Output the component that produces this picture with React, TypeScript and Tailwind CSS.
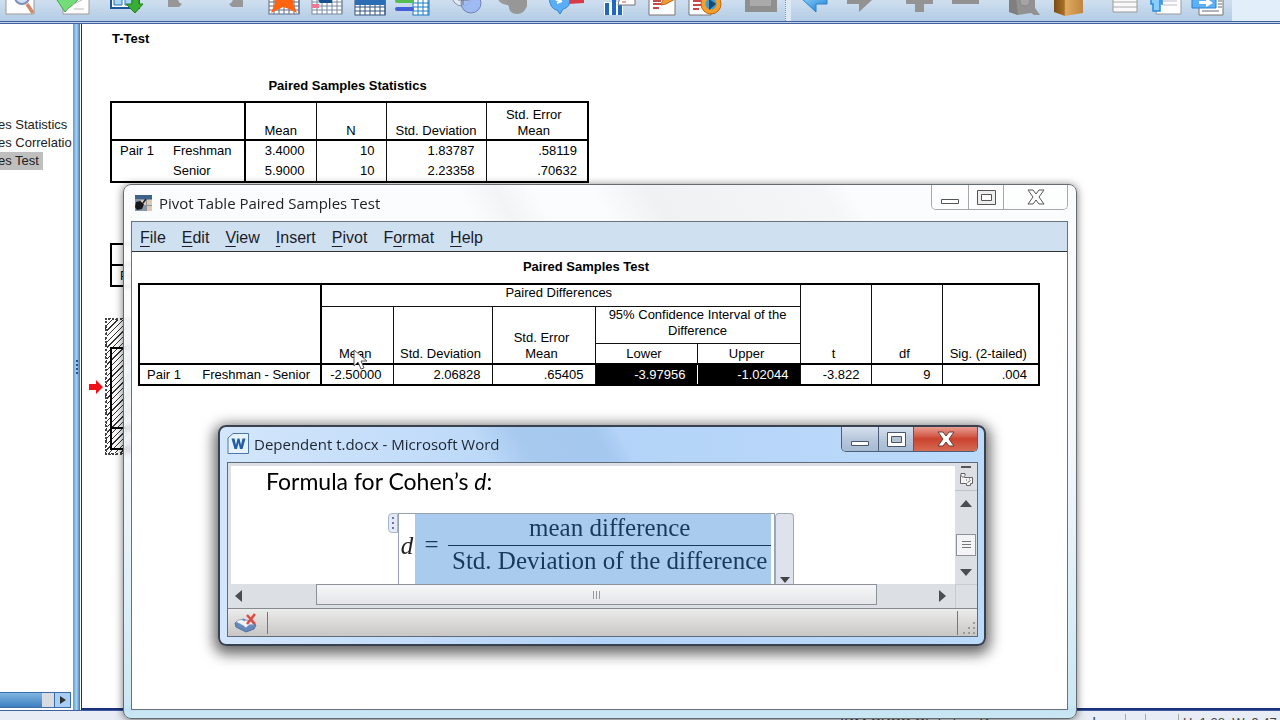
import type { ReactNode } from "react";

function ToolButton({ label, className, children }: { label: string; className: string; children: ReactNode }) {
  return (
    <button type="button" aria-label={label} className={"h-[21px] w-9 shrink-0 overflow-hidden " + className}>
      <svg viewBox="0 0 36 21" className="block h-[21px] w-9">
        {children}
      </svg>
    </button>
  );
}

function Grid({ x, y, w, h, color }: { x: number; y: number; w: number; h: number; color: string }) {
  const cols = Math.floor(w / 5);
  const rows = Math.floor(h / 4);
  return (
    <g stroke={color} strokeWidth="1">
      <rect x={x} y={y} width={w} height={h} fill="#fff" />
      {Array.from({ length: cols }, (_, i) => (
        <path key={"c" + i} d={`M${x + (i + 1) * 5} ${y}v${h}`} />
      ))}
      {Array.from({ length: rows }, (_, i) => (
        <path key={"r" + i} d={`M${x} ${y + h - (i + 1) * 4}h${w}`} />
      ))}
    </g>
  );
}

function Toolbar() {
  return (
    <header className="flex h-[21px] shrink-0 bg-[#e2eefa]">
      <div className="flex w-[1232px] shrink-0 bg-linear-to-b from-[#cfdff0] to-[#b3cce4]">
        <svg width="0" height="0" className="absolute">
          <defs>
            <linearGradient id="blue" x1="0" y1="0" x2="1" y2="1">
              <stop offset="0" stopColor="#8fd0ff" />
              <stop offset="1" stopColor="#1277cc" />
            </linearGradient>
            <linearGradient id="book" x1="0" y1="0" x2="1" y2="0">
              <stop offset="0" stopColor="#7a4c14" />
              <stop offset="0.35" stopColor="#a86e28" />
              <stop offset="0.4" stopColor="#e0aa60" />
              <stop offset="1" stopColor="#bf8540" />
            </linearGradient>
          </defs>
        </svg>
        <ToolButton label="Print preview" className="ml-0.5">
          <path d="M4-2h28v16H4z" fill="#fdfdfd" stroke="#a09a98" />
          <circle cx="20" cy="-3" r="7" fill="#cfe0fa" stroke="#7f8db5" strokeWidth="2" />
          <path d="M25 4l6 9" stroke="#d08866" strokeWidth="3.500" />
        </ToolButton>
        <ToolButton label="Export" className="ml-4">
          <path d="M9-2h26v16H9z" fill="#fdfdfd" stroke="#a09a98" />
          <path d="M1-3h24c-3 8-9 8-14 15L9 9z" fill="#74dd78" stroke="#3ca84a" />
          <path d="M18 5l10-5M20 9h10" stroke="#bbb" />
        </ToolButton>
        <ToolButton label="Recall dialog" className="ml-[18px]">
          <path d="M3-2h28v10H3z" fill="#fff" stroke="#1b5a9c" strokeWidth="2" />
          <path d="M6-2h8v7H6zM17-2h7v7h-7z" fill="#a7d7ff" stroke="#2473bd" />
          <path d="M24-2h7v6h4l-8 9-9-9h6z" fill="#39ad34" stroke="#20831c" />
        </ToolButton>
        <ToolButton label="Undo" className="ml-6">
          <path d="M0-2h10c0 3 1 5 4 6l-3 3H0z" fill="#979797" />
        </ToolButton>
        <ToolButton label="Redo" className="ml-1">
          <path d="M35-2H25c0 3-1 5-4 6l3 3h11z" fill="#979797" />
        </ToolButton>
        <ToolButton label="Go to data" className="ml-[21px]">
          <Grid x={4} y={-6} w={30} h={20} color="#5d6c88" />
          <path d="M9-3h19v6l4 10-8-4-6-2-6 3-6 3 4-10z" fill="#ff6510" />
        </ToolButton>
        <ToolButton label="Go to case" className="ml-2">
          <Grid x={3} y={-6} w={30} h={20} color="#7788a2" />
          <path d="M8-2h15v5H11z" fill="#16508f" />
          <path d="M3 4h7v4H3z" fill="#f07892" />
        </ToolButton>
        <ToolButton label="Go to variable" className="ml-[7px]">
          <Grid x={3} y={-5} w={30} h={20} color="#33557e" />
          <path d="M3-2h30v7H3z" fill="#2c6cb4" />
        </ToolButton>
        <ToolButton label="Variables" className="ml-[7px]">
          <Grid x={18} y={-6} w={16} h={21} color="#187bc6" />
          <path d="M2 1h15" stroke="#55bd52" strokeWidth="4" strokeLinecap="round" />
          <path d="M2 9h15" stroke="#4460d8" strokeWidth="4" strokeLinecap="round" />
        </ToolButton>
        <ToolButton label="Use variable sets" className="ml-[18px]">
          <circle cx="13" cy="-4" r="10" fill="#ecf0f8" fillOpacity="0.6" stroke="#8b92a0" />
          <circle cx="22" cy="3" r="10" fill="#98b5f3" fillOpacity="0.85" stroke="#7482b4" />
          <path d="M14-2v7M9 0h11" stroke="#777" />
        </ToolButton>
        <ToolButton label="Show all variables" className="ml-[9px]">
          <circle cx="13" cy="-5" r="10" fill="#9a9a9a" />
          <path d="M10-2h23v8c-2 5-5 8-10 8s-8-3-8-7z" fill="#979797" />
        </ToolButton>
        <ToolButton label="Spell check" className="ml-[18px]">
          <path d="M19-2h17v5l-16 1z" fill="#d83a47" />
          <path d="M1-2h20c2 6-1 10-6 11l-3 5-3-4C4 9 2 5 1-2z" fill="#59aef5" stroke="#3583cf" />
          <path d="M7-1l6 3M9 3l5-2" stroke="#fff" strokeWidth="2" />
        </ToolButton>
        <ToolButton label="Insert chart" className="ml-[17px]">
          <path d="M3 2h19v13H3z" fill="#fff" />
          <path d="M6 3v12M13 0v15M19 5v10" stroke="#2169bd" strokeWidth="4" />
          <path d="M19-3h15v8H17z" fill="#fff" stroke="#777" />
          <path d="M22-1h4M21 2h4M29-1h3" stroke="#d44" />
        </ToolButton>
        <ToolButton label="Edit script" className="ml-2">
          <path d="M4-2h26v17H4z" fill="#fff" stroke="#777" />
          <path d="M8 1h8M8 4h11M8 8h6" stroke="#c5484a" strokeWidth="2" />
          <path d="M16 5l2-5 9-4 3 3-9 5z" fill="#f09a32" stroke="#be6a14" />
        </ToolButton>
        <ToolButton label="Run script" className="ml-1.5">
          <path d="M2-2h22v17H2z" fill="#fff" stroke="#777" />
          <path d="M6 1h8M6 5h9M6 9h6" stroke="#c5484a" strokeWidth="2" />
          <circle cx="24" cy="4" r="10" fill="#f59e28" stroke="#bc6810" />
          <circle cx="24" cy="4" r="5.500" fill="#469bcc" />
          <path d="M22-1l7 5-7 6z" fill="#174973" />
        </ToolButton>
        <ToolButton label="Designate window" className="ml-5">
          <path d="M2-2h32v14H2z" fill="#8f8f8f" />
          <path d="M7-2h21v8H7z" fill="#aaa" />
        </ToolButton>
        <span className="ml-1.5 mr-1.5 h-[21px] w-1.5 shrink-0 border-l border-dotted border-l-[#7d91aa] bg-[#dce8f4]" />
        <ToolButton label="Back" className="">
          <path d="M4-2h26v6H19v8L4-2z" fill="url(#blue)" stroke="#2b82cc" />
        </ToolButton>
        <ToolButton label="Forward" className="ml-2">
          <path d="M31-2H6v6h12v8L31 0z" fill="#929292" />
        </ToolButton>
        <ToolButton label="Expand" className="ml-6">
          <path d="M14-4h9v4h9v4h-9v8h-9V4H5V0h9z" fill="#949494" />
        </ToolButton>
        <ToolButton label="Collapse" className="ml-2.5">
          <path d="M5-2h27v6H5z" fill="#929292" />
        </ToolButton>
        <ToolButton label="Show" className="ml-[23px]">
          <path d="M3-2h26v10l5 7h-6l-3-2-13 2-9-3z" fill="#929292" />
          <path d="M3-2h7l2 17-9-3z" fill="#7f7f7f" />
          <circle cx="19" cy="1" r="5" fill="#a5a5a5" stroke="#888" />
        </ToolButton>
        <ToolButton label="Hide" className="ml-2">
          <path d="M4-2h29v15l-18 3-11-4z" fill="url(#book)" />
        </ToolButton>
        <ToolButton label="Insert heading" className="ml-[21px]">
          <path d="M6-2h24v14H6z" fill="#fafafa" stroke="#999" />
          <path d="M6 2h24M6 7h24" stroke="#aaa" />
        </ToolButton>
        <ToolButton label="Insert title" className="ml-[5px]">
          <path d="M10-2h23v16H8z" fill="#fff" stroke="#999" />
          <path d="M15 1h14M15 5h14" stroke="#bbc" />
          <path d="M3-2h9v13H5V4H3zM9-2h5v7" fill="#8acdff" stroke="#268add" strokeWidth="1.500" />
        </ToolButton>
        <ToolButton label="Insert text" className="ml-1.5">
          <path d="M9-2h24v17H9z" fill="#fff" stroke="#777" />
          <path d="M12 11h17M28 1h4M28 4h4M28 7h4" stroke="#667" />
          <path d="M2-2h24v10H2z" fill="#5eb0f6" stroke="#2780cf" />
          <path d="M9 1h7v-3l7 5-7 4V4H9z" fill="#fff" />
        </ToolButton>
      </div>
    </header>
  );
}

function Outline() {
  return (
    <aside className="flex w-[73px] shrink-0 flex-col overflow-hidden bg-white font-['Liberation_Sans',sans-serif] text-[13px] leading-[18px] text-[#222]">
      <ul className="-ml-0.5 flex flex-1 flex-col items-start pt-[92px] whitespace-nowrap">
        <li>es Statistics</li>
        <li>es Correlatio</li>
        <li className="bg-[#bfbfbf] pr-1">es Test</li>
      </ul>
      <div className="mr-0.5 mb-0.5 flex h-4 border border-l-0 border-[#3c6da8]">
        <div className="flex-1 bg-linear-to-b from-[#7fb5e0] to-[#3d7fc0]" />
        <div className="w-3 bg-[#d8dbe0]" />
        <button type="button" aria-label="Scroll right" className="flex w-4 items-center justify-center border-l border-[#3c6da8] bg-[#a9cdf3]">
          <svg viewBox="0 0 6 8" className="h-2 w-1.5">
            <path d="M0 0l6 4-6 4z" fill="#333" />
          </svg>
        </button>
      </div>
    </aside>
  );
}

const thin = "border-[#111]";

function StatisticsTable() {
  const rows = [
    ["Pair 1", "Freshman", "3.4000", "10", "1.83787", ".58119"],
    ["", "Senior", "5.9000", "10", "2.23358", ".70632"],
  ];
  return (
    <table className="mt-[31px] ml-7 w-[477px] table-fixed border-collapse border-2 border-black text-[13px] leading-4">
      <caption className="pr-1 pb-[7px] font-bold">Paired Samples Statistics</caption>
      <colgroup>
        <col className="w-[54px]" />
        <col className="w-[80px]" />
        <col className="w-[71px]" />
        <col className="w-[70px]" />
        <col className="w-[100px]" />
        <col className="w-[102px]" />
      </colgroup>
      <thead>
        <tr className="h-[38px] border-b-2 border-black text-center align-bottom">
          <th colSpan={2} className="border-r-2 border-black" />
          <th className={"border-r font-normal " + thin}>Mean</th>
          <th className={"border-r font-normal " + thin}>N</th>
          <th className={"border-r font-normal " + thin}>Std. Deviation</th>
          <th className="pr-1.5 font-normal">
            Std. Error
            <br />
            Mean
          </th>
        </tr>
      </thead>
      <tbody>
        {rows.map((r) => (
          <tr key={r[1]} className="h-[21px] text-right">
            <th className="pl-2 text-left font-normal">{r[0]}</th>
            <th className="border-r-2 border-black pl-2 text-left font-normal">{r[1]}</th>
            <td className={"border-r pr-[11px] " + thin}>{r[2]}</td>
            <td className={"border-r pr-[11px] " + thin}>{r[3]}</td>
            <td className={"border-r pr-[11px] " + thin}>{r[4]}</td>
            <td className="pr-2.5">{r[5]}</td>
          </tr>
        ))}
      </tbody>
    </table>
  );
}

function OutputPane() {
  return (
    <main className="min-w-0 flex-1 overflow-hidden border-b-2 border-l border-[#1c2f7c] bg-white font-['Liberation_Sans',sans-serif] text-black">
      <h1 className="pt-[7px] pl-[30px] text-[13px] leading-4 font-bold">T-Test</h1>
      <StatisticsTable />
      <table className="mt-[60px] ml-7 w-[477px] border-collapse border-2 border-black text-[13px] leading-4">
        <tbody>
          <tr className="h-[21px] border-b-2 border-black">
            <td />
          </tr>
          <tr className="h-[21px]">
            <td className="pl-2">Pair 1</td>
          </tr>
        </tbody>
      </table>
      <div className="mt-[31px] flex items-center gap-0.5 pl-[7px]">
        <svg viewBox="0 0 14 14" className="h-3.5 w-3.5">
          <path d="M0 4h7V0l7 7-7 7v-4H0z" fill="#f01018" />
        </svg>
        <div className="h-[137px] w-[800px] border-2 border-dotted border-[#444] bg-[repeating-linear-gradient(135deg,#fff_0_3px,#333_3px_4px)] pt-[27px] pl-[3px]">
          <div className="h-[82px] w-[780px] border-2 border-black" />
          <div className="h-[21px] w-[780px] border-2 border-t-0 border-black" />
        </div>
      </div>
    </main>
  );
}

function CaptionButtons({ active }: { active: boolean }) {
  const ink = active ? "#4a5668" : "#555";
  const line = active ? "border-[#4c5e78]" : "border-[#a6a8ac]";
  const face = active ? "bg-linear-to-b from-[#d4e0ef] via-[#b8c8dc] to-[#a5bad3]" : "bg-white/40";
  const close = active ? "bg-linear-to-b from-[#e79d92] via-[#cb4230] to-[#d66a52]" : "bg-white/60";
  return (
    <div className={"flex h-[25px] w-[137px] overflow-hidden rounded-b-[5px] border border-t-0 " + line}>
      <button type="button" aria-label="Minimize" className={"flex w-[37px] items-center justify-center border-r " + line + " " + face}>
        <svg viewBox="0 0 18 14" className="h-3.5 w-[18px]">
          <path d="M.5 9.500h17v4H.5z" fill="#fff" stroke={ink} />
        </svg>
      </button>
      <button type="button" aria-label="Maximize" className={"flex w-[35px] items-center justify-center border-r " + line + " " + face}>
        <svg viewBox="0 0 19 15" className="h-[15px] w-[19px]">
          <path d="M.5.5h18v14H.5z" fill={active ? "#fff" : "#eee"} stroke={ink} />
          <path d="M4.500 4.500h10v6h-10z" fill={active ? "#b5c3d5" : "#fff"} stroke={ink} />
        </svg>
      </button>
      <button type="button" aria-label="Close" className={"flex flex-1 items-center justify-center " + close}>
        <svg viewBox="0 0 18 16" className="h-4 w-[18px]">
          <path d="M1 1h5l3 4 3-4h5l-5 7 5 7h-5l-3-4-3 4H1l5-7z" fill="#fff" stroke={active ? "#6b3836" : ink} strokeLinejoin="round" />
        </svg>
      </button>
    </div>
  );
}

const menus = [
  ["", "F", "ile"],
  ["", "E", "dit"],
  ["", "V", "iew"],
  ["", "I", "nsert"],
  ["", "P", "ivot"],
  ["F", "o", "rmat"],
  ["", "H", "elp"],
];

function TestTable() {
  const head = "border border-[#111] font-normal";
  return (
    <table className="w-[900px] table-fixed border-collapse border-2 border-black text-[13px] leading-4">
      <caption className="pr-1.5 pb-2 font-bold">Paired Samples Test</caption>
      <colgroup>
        <col className="w-[182px]" />
        <col className="w-[72px]" />
        <col className="w-[99px]" />
        <col className="w-[103px]" />
        <col className="w-[102px]" />
        <col className="w-[103px]" />
        <col className="w-[71px]" />
        <col className="w-[71px]" />
        <col className="w-[97px]" />
      </colgroup>
      <thead className="border-b-2 border-black text-center">
        <tr className="h-[22px] align-bottom">
          <th rowSpan={3} className="border-r-2 border-black" />
          <th colSpan={5} className={"pr-1 align-top " + head}>Paired Differences</th>
          <th rowSpan={3} className={"pr-1 pb-px " + head}>t</th>
          <th rowSpan={3} className={"pr-1 pb-px " + head}>df</th>
          <th rowSpan={3} className="pr-1 pb-px font-normal">Sig. (2-tailed)</th>
        </tr>
        <tr className="h-[37px] align-bottom">
          <th rowSpan={2} className={"pr-1 pb-px " + head}>Mean</th>
          <th rowSpan={2} className={"pr-1 pb-px " + head}>Std. Deviation</th>
          <th rowSpan={2} className={"pr-1 pb-px " + head}>
            Std. Error
            <br />
            Mean
          </th>
          <th colSpan={2} className={"px-1 align-top " + head}>95% Confidence Interval of the Difference</th>
        </tr>
        <tr className="h-[21px] align-bottom">
          <th className={"pr-1 pb-px " + head}>Lower</th>
          <th className={"pr-1 pb-px " + head}>Upper</th>
        </tr>
      </thead>
      <tbody>
        <tr className="h-[21px] text-right">
          <th className="border-r-2 border-black pr-2.5 pl-[7px] font-normal">
            <span className="flex justify-between">
              <span>Pair 1</span>
              <span>Freshman - Senior</span>
            </span>
          </th>
          <td className="border-r border-[#111] pr-[11px]">-2.50000</td>
          <td className="border-r border-[#111] pr-[11px]">2.06828</td>
          <td className="border-r border-[#111] pr-[11px]">.65405</td>
          <td className="border-r border-white bg-black pr-[11px] text-white">-3.97956</td>
          <td className="border-r border-[#111] bg-black pr-[11px] text-white">-1.02044</td>
          <td className="border-r border-[#111] pr-[11px]">-3.822</td>
          <td className="border-r border-[#111] pr-[11px]">9</td>
          <td className="pr-[11px]">.004</td>
        </tr>
      </tbody>
    </table>
  );
}

function PivotWindow() {
  return (
    <section className="absolute top-[184px] left-[123px] flex h-[535px] w-[954px] flex-col rounded-[8px] border border-[#666b70] bg-linear-to-b from-[#fbfcfd]/95 via-[#f2f6fa]/80 to-[#c6e6f3]/95 pr-2 pb-2 pl-[7px] font-['Liberation_Sans',sans-serif] text-black shadow-[0_1px_8px_rgba(0,0,0,0.55)] backdrop-blur-[2px]">
      <div className="flex h-9 items-start justify-between rounded-t-[7px] bg-[linear-gradient(60deg,transparent_0_36%,#f3f4f5_40%,transparent_44%_50%,#f0f1f2_56%,#f5f6f7_74%,transparent_77%)]">
        <div className="flex items-center gap-[7px] pt-[7px] pl-1">
          <svg viewBox="0 0 17 16" className="h-4 w-[17px]">
            <path d="M0 0h17v16H0z" fill="#8795a9" />
            <path d="M0 0h17v4H0z" fill="#3f628b" />
            <path d="M6 5h5v5H6zM12 5h5v5h-5zM12 11h5v5h-5z" fill="#dfc8b0" />
            <path d="M1 7l4-1 4 3-2 5-5 1-2-3z" fill="#16181c" />
            <path d="M8 8l3-4" stroke="#222" strokeWidth="1.500" />
          </svg>
          <h2 className="font-['Open_Sans','Noto_Sans',sans-serif] text-[15px] leading-[22px] text-[#222]">Pivot Table Paired Samples Test</h2>
        </div>
        <CaptionButtons active={false} />
      </div>
      <div className="flex flex-1 flex-col border border-[#6b7178] bg-white">
        <nav className="flex h-[30px] items-center gap-4 border-b border-[#333] bg-[#cfe0f1] pt-0.5 pl-2 text-base leading-5 text-[#1c1c28]">
          {menus.map(([a, b, c]) => (
            <button key={b + c} type="button">
              {a}
              <span className="underline underline-offset-3">{b}</span>
              {c}
            </button>
          ))}
        </nav>
        <div className="pt-[7px] pl-1.5">
          <TestTable />
        </div>
      </div>
    </section>
  );
}

function Equation() {
  return (
    <div className="flex h-[71px] items-start pl-[157px] font-['Liberation_Serif',serif] text-[25px] leading-[30px] text-[#17395c]">
      <div className="flex h-5 w-2.5 items-center justify-center rounded-l-sm border border-[#a9b6cb] bg-[#e4ebf6]">
        <svg viewBox="0 0 2 12" className="h-3 w-0.5">
          <path d="M0 0h2v2H0zM0 5h2v2H0zM0 10h2v2H0z" fill="#6079a8" />
        </svg>
      </div>
      <div className="flex h-[71px] border border-b-0 border-[#97a3b5] pr-[3px]">
        <div className="flex w-4 items-center justify-center pb-[7px] text-[#222] italic">d</div>
        <div className="flex items-start bg-[#a9cbed]">
          <span className="w-[33px] pt-4 text-center">=</span>
          <div className="flex h-[71px] flex-col text-center whitespace-nowrap">
            <span className="h-8 border-b border-[#17395c] leading-7">mean difference</span>
            <span className="px-1">Std. Deviation of the difference</span>
          </div>
        </div>
      </div>
      <button type="button" aria-label="Equation options" className="flex h-[71px] w-[19px] items-end justify-center rounded-t-sm border border-b-0 border-[#a3a9b3] bg-[#dde2ec] pb-px">
        <svg viewBox="0 0 10 6" className="h-1.5 w-2.5">
          <path d="M0 0h10L5 6z" fill="#444" />
        </svg>
      </button>
    </div>
  );
}

function WordWindow() {
  return (
    <section className="absolute top-[425px] left-[218px] flex h-[221px] w-[768px] flex-col rounded-[8px] border-2 border-[#38414d] bg-linear-to-r from-[#d3e6fb] via-[#b3d3f8] to-[#bcdafa] pr-1.5 pb-[7px] pl-[7px] text-black shadow-[0_4px_14px_4px_rgba(0,0,0,0.6)]">
      <div className="flex h-[35px] items-start justify-between bg-[linear-gradient(60deg,transparent_0_34%,#a7c9ee_40%,#a5c8ef_50%,transparent_53%)]">
        <div className="flex items-center gap-[5px] pt-1.5">
          <svg viewBox="0 0 22 22" className="h-[22px] w-[22px]">
            <path d="M6 .5h15.500v20H1V5z" fill="#e8f2fc" stroke="#4b78ac" />
            <path d="M4.500 5.500h3l1.500 6.500 1.500-6.500h2l1.500 6.500 1.500-6.500h3L15.500 16h-2.500l-1.500-6-1.500 6H7.500z" fill="#215fa8" />
          </svg>
          <h2 className="font-['Open_Sans','Noto_Sans',sans-serif] text-[15px] leading-[22px] text-[#1b2530]">Dependent t.docx - Microsoft Word</h2>
        </div>
        <CaptionButtons active />
      </div>
      <div className="flex min-h-0 flex-1 flex-col border border-[#5e6b7b] bg-[#dcdfe4]">
        <div className="flex h-[121px]">
          <div className="min-w-0 flex-1 pt-[3px] pl-[3px]">
            <div className="h-full overflow-hidden bg-white">
              <p className="h-[47px] pl-[35px] font-['Lato',sans-serif] text-[23px] leading-[30px]">
                Formula for Cohen’s <i>d</i>:
              </p>
              <Equation />
            </div>
          </div>
          <div className="flex w-[22px] flex-col items-center pt-[3px]">
            <span className="h-0.5 w-2.5 bg-[#555]" />
            <button type="button" aria-label="View ruler" className="flex h-[23px] w-full items-center justify-center border-b border-[#bfc3ca]">
              <svg viewBox="0 0 13 13" className="h-[13px] w-[13px]" fill="#f4f4f4" stroke="#666">
                <path d="M.5 2.500h3l1 2h8v6h-2v2h-4v-2h-6z" />
                <path d="M1 .5h4v2l-2 2-2-2zM6 7h1M9 6h1M7.500 9.500l3-2" />
              </svg>
            </button>
            <button type="button" aria-label="Scroll up" className="flex h-[25px] items-center">
              <svg viewBox="0 0 12 7" className="h-[7px] w-3">
                <path d="M0 7h12L6 0z" fill="#4a4d52" />
              </svg>
            </button>
            <div className="mt-[18px] flex h-[22px] w-5 items-center justify-center border border-[#8d9299] bg-[#f3f4f5]">
              <svg viewBox="0 0 9 8" className="h-2 w-[9px]">
                <path d="M0 .5h9M0 3.500h9M0 6.500h9" stroke="#777" />
              </svg>
            </div>
            <button type="button" aria-label="Scroll down" className="flex flex-1 items-center pt-1">
              <svg viewBox="0 0 12 7" className="h-[7px] w-3">
                <path d="M0 0h12L6 7z" fill="#4a4d52" />
              </svg>
            </button>
          </div>
        </div>
        <div className="flex h-6 items-center">
          <button type="button" aria-label="Scroll left" className="w-[88px] pl-[7px]">
            <svg viewBox="0 0 7 12" className="h-3 w-[7px]">
              <path d="M7 0v12L0 6z" fill="#4a4d52" />
            </svg>
          </button>
          <div className="mb-[3px] flex h-[21px] flex-1 items-center justify-center border border-[#8d9299] bg-linear-to-b from-[#f6f7f8] to-[#e3e5e8]">
            <svg viewBox="0 0 8 8" className="h-2 w-2">
              <path d="M.5 0v8M3.500 0v8M6.500 0v8" stroke="#999" />
            </svg>
          </div>
          <button type="button" aria-label="Scroll right" className="w-[78px] pl-[62px]">
            <svg viewBox="0 0 7 12" className="h-3 w-[7px]">
              <path d="M0 0v12l7-6z" fill="#4a4d52" />
            </svg>
          </button>
          <span className="h-6 w-[22px] border-t border-l border-[#c8ccd2]" />
        </div>
        <footer className="flex flex-1 items-center border-t border-[#858a90] bg-linear-to-b from-[#ececec] to-[#c9c7c5] pl-1.5">
          <svg viewBox="0 0 24 22" className="h-[22px] w-6">
            <path d="M1 11l8-4 13 6-2 4-8 3-10-5z" fill="#6688bd" stroke="#5470a0" />
            <path d="M2 10c3-3 6-3 8-1 3-2 7 0 10 4-4-1-6 0-8 3-3-3-6-4-10-6z" fill="#f3f6fb" stroke="#8ea2c4" />
            <path d="M13 3l8 9M21 2l-8 10" stroke="#e04a40" strokeWidth="2.500" />
          </svg>
          <span className="ml-[9px] h-[22px] w-px bg-[#777]" />
          <span className="ml-auto h-[24px] w-px bg-[#777]" />
          <svg viewBox="0 0 19 26" className="h-[26px] w-[19px]">
            <path d="M15 12h2v2h-2zM15 17h2v2h-2zM10 17h2v2h-2zM15 22h2v2h-2zM10 22h2v2h-2zM5 22h2v2H5z" fill="#9b9b9b" />
          </svg>
        </footer>
      </div>
    </section>
  );
}

export default function App() {
  return (
    <div className="relative flex h-screen flex-col overflow-hidden bg-white">
      <Toolbar />
      <div className="h-[3px] shrink-0 border-y border-[#3f5f9e] bg-[#c4d5ea]" />
      <div className="flex min-h-0 flex-1">
        <Outline />
        <div className="mr-px flex w-[7px] shrink-0 items-center bg-linear-to-r from-[#5a9bd3] via-[#a6d2f2] to-[#3f76bc]">
          <svg viewBox="0 0 7 14" className="h-3.5 w-[7px]">
            <path d="M3 0h2v2H3zM3 4h2v2H3zM3 8h2v2H3zM3 12h2v2H3z" fill="#28538f" />
          </svg>
        </div>
        <OutputPane />
      </div>
      <footer className="flex h-2.5 shrink-0 overflow-hidden border-t border-[#3f5f9e] bg-[#e8ecf4] pt-[3px] font-['Liberation_Sans',sans-serif] text-[15px] leading-[18px] whitespace-nowrap text-[#444]">
        <span className="ml-auto h-5 w-[290px] border-r border-[#aaa] pl-1">IBM SPSS Statistics Processor is ready</span>
        <span className="h-5 w-5 border-r border-[#aaa]" />
        <span className="h-5 w-[33px] border-r border-[#aaa]" />
        <span className="h-5 w-[101px] pl-1 text-[13px]">H: 1.38, W: 9.47 in</span>
      </footer>
      <PivotWindow />
      <WordWindow />
      <svg viewBox="0 0 15 22" className="pointer-events-none absolute top-[349px] left-[353px] h-[22px] w-[15px]">
        <path d="M1 1v16l4-4 3 7 3-1-3-7h6z" fill="#fff" stroke="#555" strokeLinejoin="round" />
      </svg>
    </div>
  );
}
